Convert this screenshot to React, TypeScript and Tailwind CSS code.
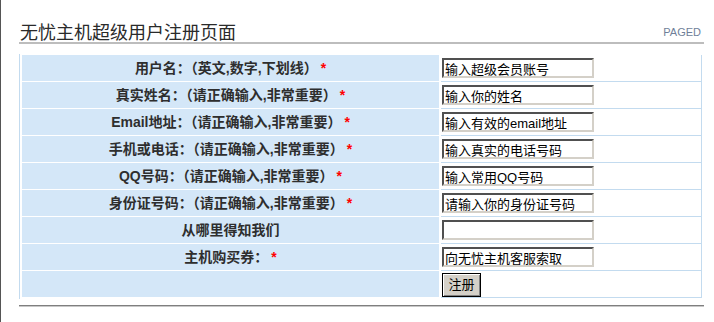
const fields = [
  { label: '用户名：（英文,数字,下划线）', required: true, value: '输入超级会员账号' },
  { label: '真实姓名：（请正确输入,非常重要）', required: true, value: '输入你的姓名' },
  { label: 'Email地址：（请正确输入,非常重要）', required: true, value: '输入有效的email地址' },
  { label: '手机或电话：（请正确输入,非常重要）', required: true, value: '输入真实的电话号码' },
  { label: 'QQ号码：（请正确输入,非常重要）', required: true, value: '输入常用QQ号码' },
  { label: '身份证号码：（请正确输入,非常重要）', required: true, value: '请输入你的身份证号码' },
  { label: '从哪里得知我们', required: false, value: '' },
  { label: '主机购买券：', required: true, value: '向无忧主机客服索取' },
];

export default function App() {
  return (
    <div className="h-[322px] w-[714px] overflow-hidden border-l border-[#555] bg-white font-['Liberation_Sans','Noto_Sans_CJK_SC',sans-serif]">
      <div className="ml-[18px] mr-[10px] pt-[22px]">
        <div className="flex h-[22px] items-start justify-between border-b-2 border-[#bdbdbd]">
          <span className="pl-[1px] text-[18px] leading-[22px] text-[#2a2a2a]">无忧主机超级用户注册页面</span>
          <span className="pr-[3px] pt-[4px] text-[11px] leading-[12px] text-[#6f7f99]">PAGED</span>
        </div>

        <div className="mr-[2px] mt-[10px] border-l border-[#c3dbef] pb-[1px] pl-[2px] pt-[1px]">
          {fields.map((f) => (
            <div key={f.label} className="flex h-[27px]">
              <div className="flex h-[26px] w-[417px] items-center justify-center bg-[#d4e7f8] text-[14px] font-bold text-[#2e2e2e]">
                {f.label}
                {f.required && <span className="ml-[3px] text-[#ff0000]">*</span>}
              </div>
              <div className="ml-[2px] h-[27px] flex-1 border-b border-r border-[#c3dbef] pl-[1px] pt-[3px]">
                <input
                  readOnly
                  value={f.value}
                  className="block h-[20px] w-[152px] border-2 border-b-[#d4d0c8] border-l-[#505050] border-r-[#d4d0c8] border-t-[#505050] bg-white px-[1px] text-[13px] leading-[16px] text-black outline-none"
                />
              </div>
            </div>
          ))}
          <div className="flex h-[27px]">
            <div className="h-[26px] w-[417px] bg-[#d4e7f8]" />
            <div className="ml-[2px] h-[27px] flex-1 border-b border-r border-[#c3dbef] pl-[1px] pt-[1px]">
              <button className="h-[24px] w-[39px] border border-black bg-[#d4d0c8] text-[13px] leading-[20px] text-black shadow-[inset_1px_1px_0_#fff,inset_-1px_-1px_0_#808080]">
                注册
              </button>
            </div>
          </div>
        </div>

        <div className="mt-[6px] h-px bg-[#7f7f7f]" />
        <div className="h-px bg-[#c8c8c8]" />
      </div>
    </div>
  );
}
